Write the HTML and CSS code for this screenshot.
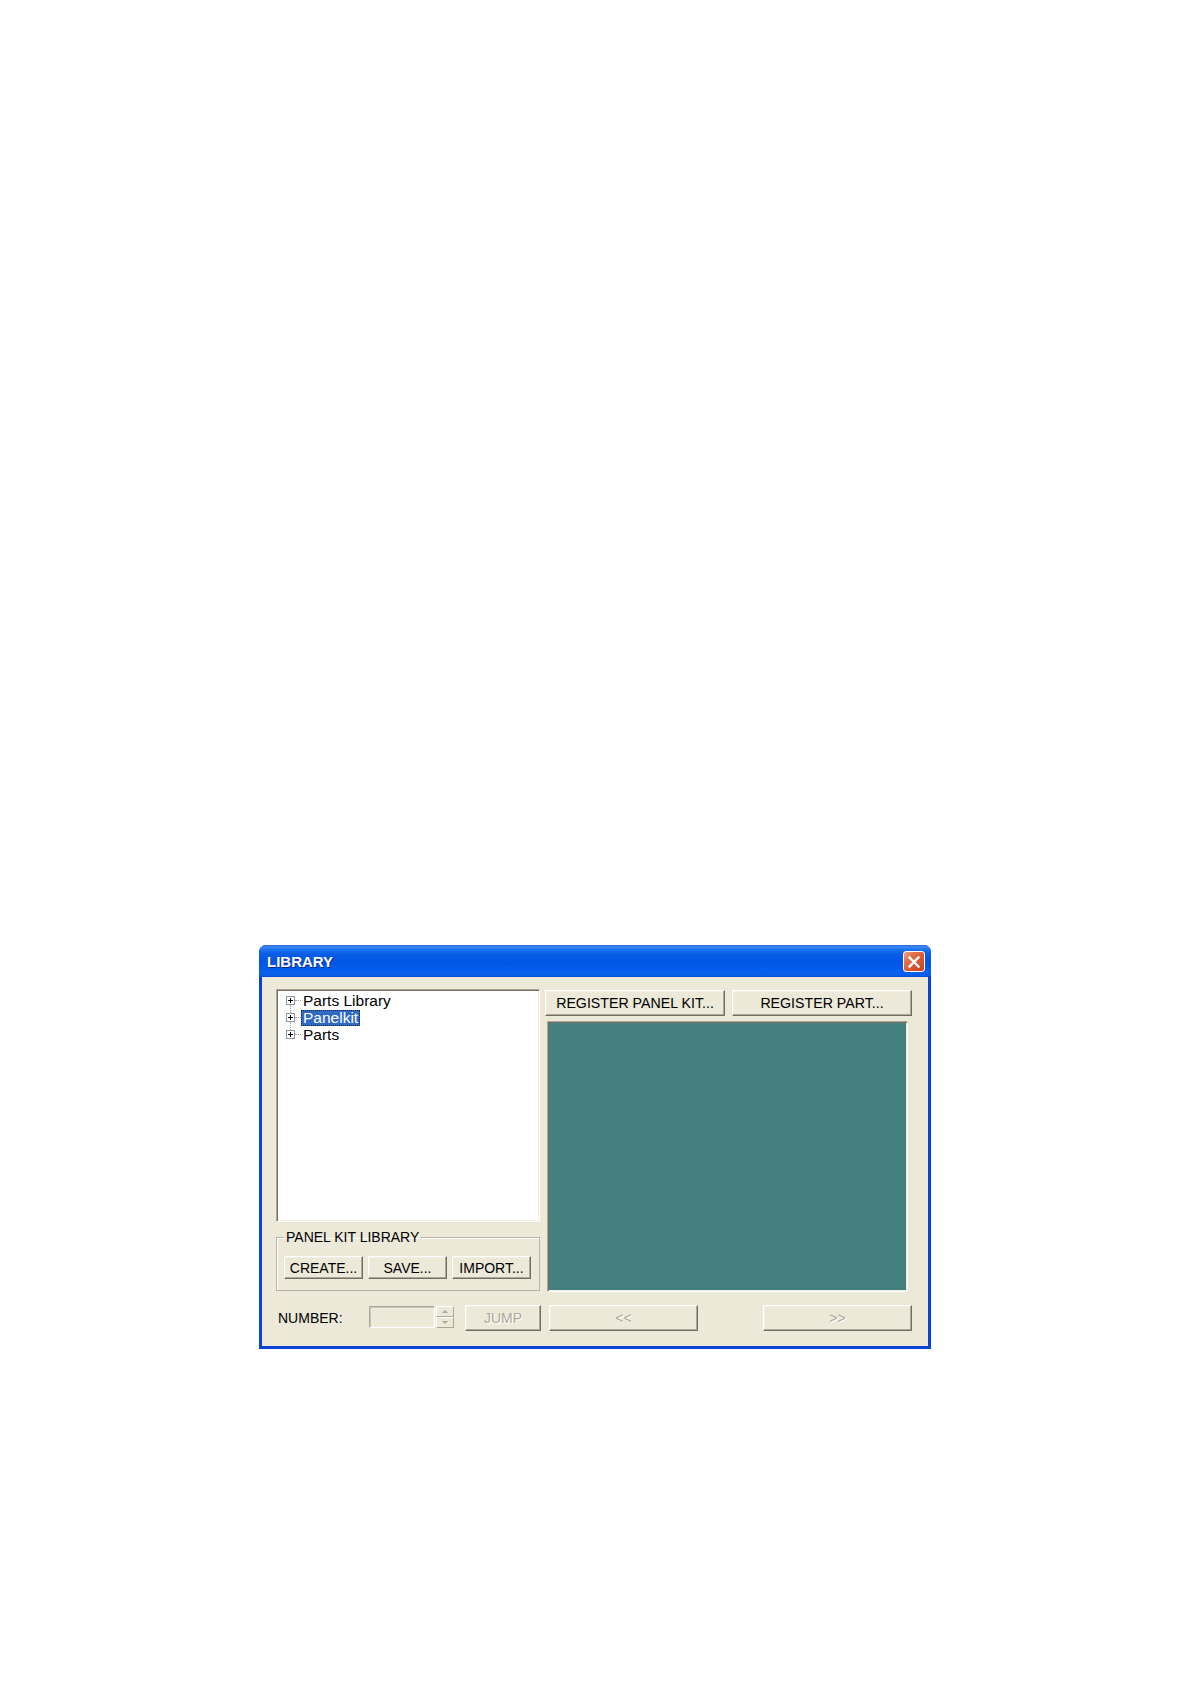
FILE: index.html
```html
<!DOCTYPE html>
<html lang="en">
<head>
    <meta charset="UTF-8">
    <meta name="viewport" content="width=device-width, initial-scale=1.0">
    <title>LIBRARY</title>
    <link rel="stylesheet" href="styles.css">
</head>
<body>
    <div class="page">
        <div class="window">
            <div class="titlebar">
                <span class="title">LIBRARY</span>
                <div class="close-btn">
                    <svg width="14" height="14" viewBox="0 0 14 14">
                        <path d="M2.5 2.5L11.5 11.5M11.5 2.5L2.5 11.5" stroke="#fff" stroke-width="2.4" stroke-linecap="square"/>
                    </svg>
                </div>
            </div>

            <div class="client">
                <div class="main">
                    <div class="left-col">
                        <div class="tree">
                            <div class="tree-item">
                                <span class="expander">
                                    <svg width="9" height="9" viewBox="0 0 9 9"><rect x="0.5" y="0.5" width="8" height="8" fill="#fff" stroke="#8c97a3"/><path d="M2 4.5h5M4.5 2v5" stroke="#000"/></svg>
                                </span>
                                <span class="tree-label">Parts Library</span>
                            </div>
                            <div class="tree-item">
                                <span class="expander">
                                    <svg width="9" height="9" viewBox="0 0 9 9"><rect x="0.5" y="0.5" width="8" height="8" fill="#fff" stroke="#8c97a3"/><path d="M2 4.5h5M4.5 2v5" stroke="#000"/></svg>
                                </span>
                                <span class="tree-label selected">Panelkit</span>
                            </div>
                            <div class="tree-item">
                                <span class="expander">
                                    <svg width="9" height="9" viewBox="0 0 9 9"><rect x="0.5" y="0.5" width="8" height="8" fill="#fff" stroke="#8c97a3"/><path d="M2 4.5h5M4.5 2v5" stroke="#000"/></svg>
                                </span>
                                <span class="tree-label">Parts</span>
                            </div>
                        </div>

                        <fieldset class="group">
                            <legend>PANEL KIT LIBRARY</legend>
                            <div class="group-buttons">
                                <div class="btn">CREATE...</div>
                                <div class="btn">SAVE...</div>
                                <div class="btn">IMPORT...</div>
                            </div>
                        </fieldset>
                    </div>

                    <div class="right-col">
                        <div class="top-buttons">
                            <div class="btn btn-wide">REGISTER PANEL KIT...</div>
                            <div class="btn btn-wide">REGISTER PART...</div>
                        </div>
                        <div class="preview"></div>
                    </div>
                </div>

                <div class="bottom-row">
                    <span class="number-label">NUMBER:</span>
                    <div class="number-input"></div>
                    <div class="spinner">
                        <div class="spin-btn"><span class="arrow-up"></span></div>
                        <div class="spin-btn"><span class="arrow-down"></span></div>
                    </div>
                    <div class="btn disabled btn-jump">JUMP</div>
                    <div class="btn disabled btn-nav">&lt;&lt;</div>
                    <div class="btn disabled btn-nav btn-next">&gt;&gt;</div>
                </div>
            </div>
        </div>
    </div>
</body>
</html>
```

FILE: styles.css
```css
:root {
    --face: #ECE9D8;
    --shadow: #ACA899;
    --dark-shadow: #716F64;
    --light: #F1EFE2;
    --frame: #0843d6;
    --teal: #43807E;
    --select: #316AC5;
    --gray-text: #ACA899;
}

* {
    margin: 0;
    padding: 0;
    box-sizing: border-box;
}

body {
    background-color: #fff;
    font-family: 'Liberation Sans', Arial, sans-serif;
    color: #000;
}

.page {
    padding: 945px 0 0 259px;
}

.window {
    width: 672px;
    height: 404px;
    background-color: var(--frame);
    border-radius: 7px 7px 0 0;
    display: flex;
    flex-direction: column;
    overflow: hidden;
}

.titlebar {
    height: 32px;
    display: flex;
    align-items: center;
    justify-content: space-between;
    padding: 0 6px 0 8px;
    background: linear-gradient(to bottom, #2a66d6 0, #3d8af5 2px, #1f74f2 4px, #0a5de6 9px, #0055e5 55%, #0760ec 85%, #0b5fe8 94%, #0548d4 100%);
}

.title {
    color: #fff;
    font-size: 15px;
    font-weight: bold;
    text-shadow: 1px 1px 0 #0c2a8a;
    margin-top: 1px;
}

.close-btn {
    width: 22px;
    height: 21px;
    border: 1px solid #fff;
    border-radius: 3px;
    background: linear-gradient(135deg, #f2a489 0%, #e5704c 30%, #d8532e 65%, #c4401f 100%);
    display: flex;
    align-items: center;
    justify-content: center;
    margin-top: 1px;
}

.client {
    flex: 1;
    margin: 0 3px 3px;
    background-color: var(--face);
    padding: 12px 16px 13px 14px;
    display: flex;
    flex-direction: column;
}

.main {
    display: flex;
}

.left-col {
    width: 264px;
    display: flex;
    flex-direction: column;
}

.tree {
    height: 233px;
    background-color: #fff;
    border: 1px solid;
    border-color: var(--shadow) #fff #fff var(--shadow);
    box-shadow: inset 1px 1px 0 var(--dark-shadow), inset -1px -1px 0 var(--light);
    padding: 2px 0 0 9px;
}

.tree-item {
    display: flex;
    align-items: center;
    height: 17px;
    font-size: 15.5px;
}

.expander {
    position: relative;
    width: 9px;
    height: 9px;
    display: flex;
}

.expander::after {
    content: '';
    position: absolute;
    left: 9px;
    top: 4px;
    width: 6px;
    border-top: 1px dotted #a0a0a0;
}

.tree-item:not(:last-child) .expander::before {
    content: '';
    position: absolute;
    left: 4px;
    top: 9px;
    height: 8px;
    border-left: 1px dotted #a0a0a0;
}

.tree-label {
    margin-left: 6px;
    padding: 0 2px;
    line-height: 16px;
    white-space: nowrap;
}

.tree-label.selected {
    background-color: var(--select);
    color: #fff;
    outline: 1px dotted #1a2850;
    outline-offset: -1px;
}

.group {
    width: 264px;
    min-width: 0;
    margin-top: 7px;
    border: 1px solid #b8b5a6;
    box-shadow: inset 1px 1px 0 #fff;
    padding: 11px 6px 11px 7px;
}

.group legend {
    font-size: 14px;
    padding: 0 2px;
    line-height: 16px;
}

.group-buttons {
    display: flex;
    gap: 5px;
}

.btn {
    height: 23px;
    width: 80px;
    background-color: var(--face);
    border: 1px solid;
    border-color: #fff var(--dark-shadow) var(--dark-shadow) #fff;
    box-shadow: inset -1px -1px 0 var(--shadow), inset 1px 1px 0 var(--light);
    font-size: 14px;
    display: flex;
    align-items: center;
    justify-content: center;
    white-space: nowrap;
}

.group-buttons .btn {
    width: 79px;
}

.right-col {
    margin-left: 5px;
    display: flex;
    flex-direction: column;
}

.top-buttons {
    display: flex;
    gap: 7px;
    margin-top: 1px;
}

.btn-wide {
    width: 180px;
    height: 26px;
    font-size: 14.2px;
}

.preview {
    width: 361px;
    height: 271px;
    margin: 5px 0 0 2px;
    background-color: var(--teal);
    border: 1px solid;
    border-color: var(--shadow) #fff #fff var(--shadow);
    box-shadow: inset 1px 1px 0 var(--dark-shadow), inset -1px -1px 0 var(--light);
}

.bottom-row {
    display: flex;
    align-items: flex-start;
    margin-top: 13px;
}

.number-label {
    width: 93px;
    padding-left: 2px;
    font-size: 14px;
    line-height: 26px;
}

.number-input {
    width: 66px;
    height: 22px;
    margin-top: 1px;
    background-color: var(--face);
    border: 1px solid;
    border-color: var(--shadow) #fff #fff var(--shadow);
    box-shadow: inset 1px 1px 0 #c9c6b8, inset -1px -1px 0 var(--light);
}

.spinner {
    width: 18px;
    margin-left: 1px;
    margin-top: 1px;
    display: flex;
    flex-direction: column;
}

.spin-btn {
    height: 11px;
    background-color: var(--face);
    border: 1px solid;
    border-color: #fff var(--shadow) var(--shadow) #fff;
    display: flex;
    align-items: center;
    justify-content: center;
}

.arrow-up,
.arrow-down {
    width: 0;
    height: 0;
    border-left: 3px solid transparent;
    border-right: 3px solid transparent;
}

.arrow-up {
    border-bottom: 3px solid var(--gray-text);
}

.arrow-down {
    border-top: 3px solid var(--gray-text);
}

.btn.disabled {
    color: var(--gray-text);
    text-shadow: 1px 1px 0 #fff;
    height: 26px;
}

.btn-jump {
    width: 76px;
    margin-left: 11px;
}

.btn-nav {
    width: 149px;
    margin-left: 8px;
}

.btn-next {
    margin-left: auto;
}
```
